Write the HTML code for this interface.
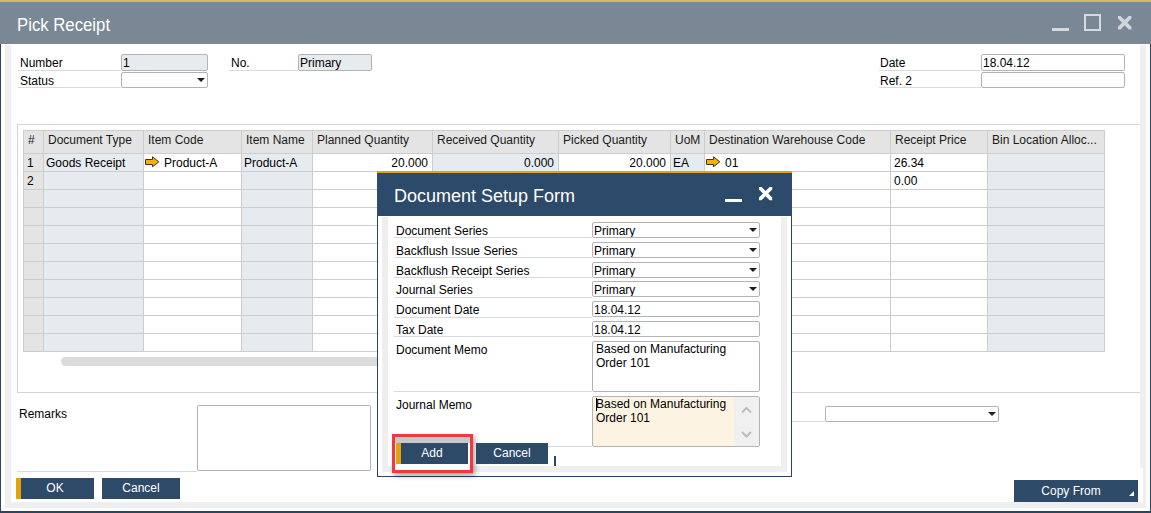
<!DOCTYPE html>
<html><head><meta charset="utf-8"><style>
*{box-sizing:border-box;margin:0;padding:0}
html,body{width:1151px;height:513px;overflow:hidden;background:#fff;font-family:"Liberation Sans",sans-serif;font-size:12px;color:#000}
.a{position:absolute}
.t{position:absolute;white-space:nowrap;line-height:14px}
.inp{position:absolute;border:1px solid #b3b3b3;border-radius:2px;background:#fff;white-space:nowrap;overflow:hidden}
.inp span{position:absolute;left:1px;line-height:14px}
.gr{background:#e6ebef}
.tri{position:absolute;width:0;height:0;border-left:4px solid transparent;border-right:4px solid transparent;border-top:4px solid #1e1e1e}
.btn{position:absolute;background:#2d4a68;color:#fff;text-align:center;white-space:nowrap}
</style></head><body>
<div class="a" style="left:0px;top:0px;width:1151px;height:2px;background:#dbb662;"></div>
<div class="a" style="left:0px;top:2px;width:1151px;height:42px;background:#7a8896;"></div>
<div class="t" style="left:17px;top:14px;font-size:18px;line-height:22px;color:#fff;transform:scaleX(0.93);transform-origin:0 0">Pick Receipt</div>
<div class="a" style="left:1052px;top:28px;width:17px;height:3px;background:#d5dade;"></div>
<div class="a" style="left:1084px;top:14px;width:17px;height:17px;border:2px solid #d5dade"></div>
<svg class="a" style="left:1118px;top:16px" width="14" height="14" viewBox="0 0 14 14"><path d="M0 0H2.6L6.7 4.1L10.8 0H13.4V2.6L9.3 6.7L13.4 10.8V13.4H10.8L6.7 9.3L2.6 13.4H0V10.8L4.1 6.7L0 2.6Z" fill="#cfd5db"/></svg>
<div class="a" style="left:0px;top:44px;width:1px;height:469px;background:#2b4460;"></div>
<div class="a" style="left:1150px;top:44px;width:1px;height:469px;background:#2b4460;"></div>
<div class="a" style="left:0px;top:511px;width:1151px;height:2px;background:#2b4460;"></div>
<div class="a" style="left:5px;top:45px;width:6px;height:463px;background:#efefef;"></div>
<div class="a" style="left:1140px;top:45px;width:6px;height:463px;background:#efefef;"></div>
<div class="a" style="left:5px;top:502px;width:1141px;height:6px;background:#efefef;"></div>
<div class="a" style="left:1140px;top:468px;width:3px;height:34px;background:#fff;"></div>
<div class="a" style="left:18px;top:70px;width:103px;height:1px;background:#d5dbe1;"></div>
<div class="t" style="left:20px;top:56px;">Number</div>
<div class="inp gr" style="left:121px;top:54px;width:87px;height:17px;"><span style="top:1px">1</span></div>
<div class="a" style="left:18px;top:87px;width:103px;height:1px;background:#d5dbe1;"></div>
<div class="t" style="left:20px;top:74px;">Status</div>
<div class="inp" style="left:121px;top:72px;width:87px;height:16px;"><div class="tri" style="left:75px;top:5px"></div></div>
<div class="a" style="left:229px;top:70px;width:69px;height:1px;background:#d5dbe1;"></div>
<div class="t" style="left:231px;top:56px;">No.</div>
<div class="inp gr" style="left:298px;top:54px;width:74px;height:17px;"><span style="top:1px">Primary</span></div>
<div class="a" style="left:879px;top:70px;width:102px;height:1px;background:#d5dbe1;"></div>
<div class="t" style="left:880px;top:56px;">Date</div>
<div class="inp" style="left:981px;top:54px;width:144px;height:17px;"><span style="top:1px">18.04.12</span></div>
<div class="a" style="left:879px;top:87px;width:102px;height:1px;background:#d5dbe1;"></div>
<div class="t" style="left:880px;top:74px;">Ref. 2</div>
<div class="inp" style="left:981px;top:72px;width:144px;height:16px;"></div>
<div class="a" style="left:17px;top:124px;width:1123px;height:269px;border:1px solid #d4d4d4;border-right:none"></div>
<div class="a" style="left:23px;top:130px;width:1081px;height:23px;background:#e4e4e4;"></div>
<div class="a" style="left:23px;top:153px;width:20px;height:198px;background:#e4e4e4;"></div>
<div class="a" style="left:43px;top:153px;width:100px;height:198px;background:#e6ebef;"></div>
<div class="a" style="left:241px;top:153px;width:71px;height:198px;background:#e6ebef;"></div>
<div class="a" style="left:432px;top:153px;width:126px;height:198px;background:#e6ebef;"></div>
<div class="a" style="left:670px;top:153px;width:34px;height:198px;background:#e6ebef;"></div>
<div class="a" style="left:987px;top:153px;width:117px;height:198px;background:#e6ebef;"></div>
<div class="t" style="left:28px;top:133px;color:#1a1a1a">#</div>
<div class="t" style="left:48px;top:133px;color:#1a1a1a">Document Type</div>
<div class="t" style="left:148px;top:133px;color:#1a1a1a">Item Code</div>
<div class="t" style="left:246px;top:133px;color:#1a1a1a">Item Name</div>
<div class="t" style="left:317px;top:133px;color:#1a1a1a">Planned Quantity</div>
<div class="t" style="left:437px;top:133px;color:#1a1a1a">Received Quantity</div>
<div class="t" style="left:563px;top:133px;color:#1a1a1a">Picked Quantity</div>
<div class="t" style="left:675px;top:133px;color:#1a1a1a">UoM</div>
<div class="t" style="left:709px;top:133px;color:#1a1a1a">Destination Warehouse Code</div>
<div class="t" style="left:895px;top:133px;color:#1a1a1a">Receipt Price</div>
<div class="t" style="left:992px;top:133px;color:#1a1a1a">Bin Location Alloc...</div>
<div class="a" style="left:23px;top:130px;width:1082px;height:1px;background:#cdcdcd;"></div>
<div class="a" style="left:23px;top:153px;width:1082px;height:1px;background:#cdcdcd;"></div>
<div class="a" style="left:23px;top:171px;width:1082px;height:1px;background:#cdcdcd;"></div>
<div class="a" style="left:23px;top:189px;width:1082px;height:1px;background:#cdcdcd;"></div>
<div class="a" style="left:23px;top:207px;width:1082px;height:1px;background:#cdcdcd;"></div>
<div class="a" style="left:23px;top:225px;width:1082px;height:1px;background:#cdcdcd;"></div>
<div class="a" style="left:23px;top:243px;width:1082px;height:1px;background:#cdcdcd;"></div>
<div class="a" style="left:23px;top:261px;width:1082px;height:1px;background:#cdcdcd;"></div>
<div class="a" style="left:23px;top:279px;width:1082px;height:1px;background:#cdcdcd;"></div>
<div class="a" style="left:23px;top:297px;width:1082px;height:1px;background:#cdcdcd;"></div>
<div class="a" style="left:23px;top:315px;width:1082px;height:1px;background:#cdcdcd;"></div>
<div class="a" style="left:23px;top:333px;width:1082px;height:1px;background:#cdcdcd;"></div>
<div class="a" style="left:23px;top:351px;width:1082px;height:1px;background:#cdcdcd;"></div>
<div class="a" style="left:23px;top:130px;width:1px;height:222px;background:#cdcdcd;"></div>
<div class="a" style="left:43px;top:130px;width:1px;height:222px;background:#cdcdcd;"></div>
<div class="a" style="left:143px;top:130px;width:1px;height:222px;background:#cdcdcd;"></div>
<div class="a" style="left:241px;top:130px;width:1px;height:222px;background:#cdcdcd;"></div>
<div class="a" style="left:312px;top:130px;width:1px;height:222px;background:#cdcdcd;"></div>
<div class="a" style="left:432px;top:130px;width:1px;height:222px;background:#cdcdcd;"></div>
<div class="a" style="left:558px;top:130px;width:1px;height:222px;background:#cdcdcd;"></div>
<div class="a" style="left:670px;top:130px;width:1px;height:222px;background:#cdcdcd;"></div>
<div class="a" style="left:704px;top:130px;width:1px;height:222px;background:#cdcdcd;"></div>
<div class="a" style="left:890px;top:130px;width:1px;height:222px;background:#cdcdcd;"></div>
<div class="a" style="left:987px;top:130px;width:1px;height:222px;background:#cdcdcd;"></div>
<div class="a" style="left:1104px;top:130px;width:1px;height:222px;background:#cdcdcd;"></div>
<div class="t" style="left:27px;top:156px;">1</div>
<div class="t" style="left:46px;top:156px;">Goods Receipt</div>
<svg class="a" style="left:145px;top:156px" width="15" height="12" viewBox="0 0 15 12"><path d="M0.5 3.5H7.5V0.8L13.8 5.8L7.5 10.8V8.5H0.5Z" fill="#f5b000" stroke="#3d3430" stroke-width="1"/></svg>
<div class="t" style="left:164px;top:156px;">Product-A</div>
<div class="t" style="left:244px;top:156px;">Product-A</div>
<div class="t" style="left:312px;top:156px;width:116px;text-align:right">20.000</div>
<div class="t" style="left:432px;top:156px;width:122px;text-align:right">0.000</div>
<div class="t" style="left:558px;top:156px;width:108px;text-align:right">20.000</div>
<div class="t" style="left:673px;top:156px;">EA</div>
<svg class="a" style="left:706px;top:156px" width="15" height="12" viewBox="0 0 15 12"><path d="M0.5 3.5H7.5V0.8L13.8 5.8L7.5 10.8V8.5H0.5Z" fill="#f5b000" stroke="#3d3430" stroke-width="1"/></svg>
<div class="t" style="left:725px;top:156px;">01</div>
<div class="t" style="left:894px;top:156px;">26.34</div>
<div class="t" style="left:27px;top:174px;">2</div>
<div class="t" style="left:894px;top:174px;">0.00</div>
<div class="a" style="left:61px;top:357px;width:700px;height:9px;border-radius:4.5px;background:#dcdcdc"></div>
<div class="t" style="left:19px;top:407px;">Remarks</div>
<div class="a" style="left:17px;top:471px;width:180px;height:1px;background:#d5dbe1;"></div>
<div class="inp" style="left:197px;top:405px;width:174px;height:66px;"></div>
<div class="inp" style="left:825px;top:406px;width:174px;height:16px;"><div class="tri" style="left:162px;top:5px"></div></div>
<div class="a" style="left:791px;top:421px;width:34px;height:1px;background:#d5dbe1;"></div>
<div class="btn" style="left:16px;top:478px;width:78px;height:21px;line-height:21px">OK</div>
<div class="a" style="left:16px;top:478px;width:5px;height:21px;background:#e2a30d;"></div>
<div class="btn" style="left:102px;top:478px;width:78px;height:21px;line-height:21px">Cancel</div>
<div class="btn" style="left:1014px;top:480px;width:124px;height:22px;line-height:22px;padding-right:10px">Copy From</div>
<svg class="a" style="left:1129px;top:491px" width="5" height="5" viewBox="0 0 5 5"><path d="M5 0V5H0Z" fill="#fff"/></svg>
<div class="a" style="left:377px;top:171px;width:415px;height:306px;background:#fff;border:1px solid #2b4460;border-top:none;box-sizing:border-box"></div>
<div class="a" style="left:377px;top:171px;width:415px;height:2px;background:#e2a30d;"></div>
<div class="a" style="left:377px;top:173px;width:415px;height:43px;background:#2c4a69;"></div>
<div class="t" style="left:394px;top:185px;font-size:18px;line-height:22px;color:#fff">Document Setup Form</div>
<div class="a" style="left:725px;top:199px;width:17px;height:3px;background:#fff;"></div>
<svg class="a" style="left:759px;top:187px" width="14" height="14" viewBox="0 0 14 14"><path d="M0 0H2.6L6.6 4L10.6 0H13.2V2.6L9.2 6.6L13.2 10.6V13.2H10.6L6.6 9.2L2.6 13.2H0V10.6L4 6.6L0 2.6Z" fill="#fff"/></svg>
<div class="a" style="left:382px;top:217px;width:6px;height:255px;background:#efefef;"></div>
<div class="a" style="left:781px;top:217px;width:6px;height:255px;background:#efefef;"></div>
<div class="a" style="left:382px;top:466px;width:405px;height:6px;background:#efefef;"></div>
<div class="a" style="left:394px;top:237px;width:198px;height:1px;background:#d5dbe1;"></div>
<div class="t" style="left:396px;top:224px;">Document Series</div>
<div class="inp" style="left:592px;top:222px;width:168px;height:16px;"><span style="top:1px">Primary</span><div class="tri" style="left:156px;top:5px"></div></div>
<div class="a" style="left:394px;top:257px;width:198px;height:1px;background:#d5dbe1;"></div>
<div class="t" style="left:396px;top:244px;">Backflush Issue Series</div>
<div class="inp" style="left:592px;top:242px;width:168px;height:16px;"><span style="top:1px">Primary</span><div class="tri" style="left:156px;top:5px"></div></div>
<div class="a" style="left:394px;top:277px;width:198px;height:1px;background:#d5dbe1;"></div>
<div class="t" style="left:396px;top:264px;">Backflush Receipt Series</div>
<div class="inp" style="left:592px;top:262px;width:168px;height:16px;"><span style="top:1px">Primary</span><div class="tri" style="left:156px;top:5px"></div></div>
<div class="a" style="left:394px;top:297px;width:198px;height:1px;background:#d5dbe1;"></div>
<div class="t" style="left:396px;top:283px;">Journal Series</div>
<div class="inp" style="left:592px;top:281px;width:168px;height:16px;"><span style="top:1px">Primary</span><div class="tri" style="left:156px;top:5px"></div></div>
<div class="a" style="left:394px;top:317px;width:198px;height:1px;background:#d5dbe1;"></div>
<div class="t" style="left:396px;top:303px;">Document Date</div>
<div class="inp" style="left:592px;top:301px;width:168px;height:16px;"><span style="top:1px">18.04.12</span></div>
<div class="a" style="left:394px;top:336px;width:198px;height:1px;background:#d5dbe1;"></div>
<div class="t" style="left:396px;top:323px;">Tax Date</div>
<div class="inp" style="left:592px;top:321px;width:168px;height:16px;"><span style="top:1px">18.04.12</span></div>
<div class="a" style="left:394px;top:391px;width:198px;height:1px;background:#d5dbe1;"></div>
<div class="t" style="left:396px;top:343px;">Document Memo</div>
<div class="inp" style="left:592px;top:341px;width:168px;height:51px"><span style="top:1px;line-height:13.5px;left:3px">Based on Manufacturing<br>Order 101</span></div>
<div class="t" style="left:396px;top:398px;">Journal Memo</div>
<div class="inp" style="left:592px;top:396px;width:168px;height:51px;background:#fcf3e2"><div class="a" style="left:141px;top:0;width:25px;height:49px;background:#f0f0f0"></div><span style="top:1px;line-height:13.5px;left:3px">Based on Manufacturing<br>Order 101</span></div>
<svg class="a" style="left:739px;top:400px" width="14" height="42" viewBox="0 0 14 42"><path d="M3 12.5L7.5 8L12 12.5M3 32L7.5 36.5L12 32" fill="none" stroke="#bdbdbd" stroke-width="2"/></svg>
<div class="a" style="left:596px;top:398px;width:1px;height:13px;background:#000;"></div>
<div class="a" style="left:392px;top:434px;width:81px;height:39px;box-shadow:2px 3px 5px rgba(0,0,0,0.35);background:#fff"></div>
<div class="a" style="left:395px;top:437px;width:75px;height:6px;background:#c9c9c9;"></div>
<div class="btn" style="left:396px;top:443px;width:72px;height:21px;line-height:21px">Add</div>
<div class="a" style="left:396px;top:443px;width:5px;height:21px;background:#e2a30d;"></div>
<div class="btn" style="left:476px;top:443px;width:72px;height:21px;line-height:21px">Cancel</div>
<div class="a" style="left:554px;top:456px;width:2px;height:10px;background:#2c4a69;"></div>
<div class="a" style="left:548px;top:446px;width:44px;height:1px;background:#d5dbe1;"></div>
<div class="a" style="left:392px;top:434px;width:81px;height:39px;border:3px solid #ee3a3d"></div>
</body></html>
